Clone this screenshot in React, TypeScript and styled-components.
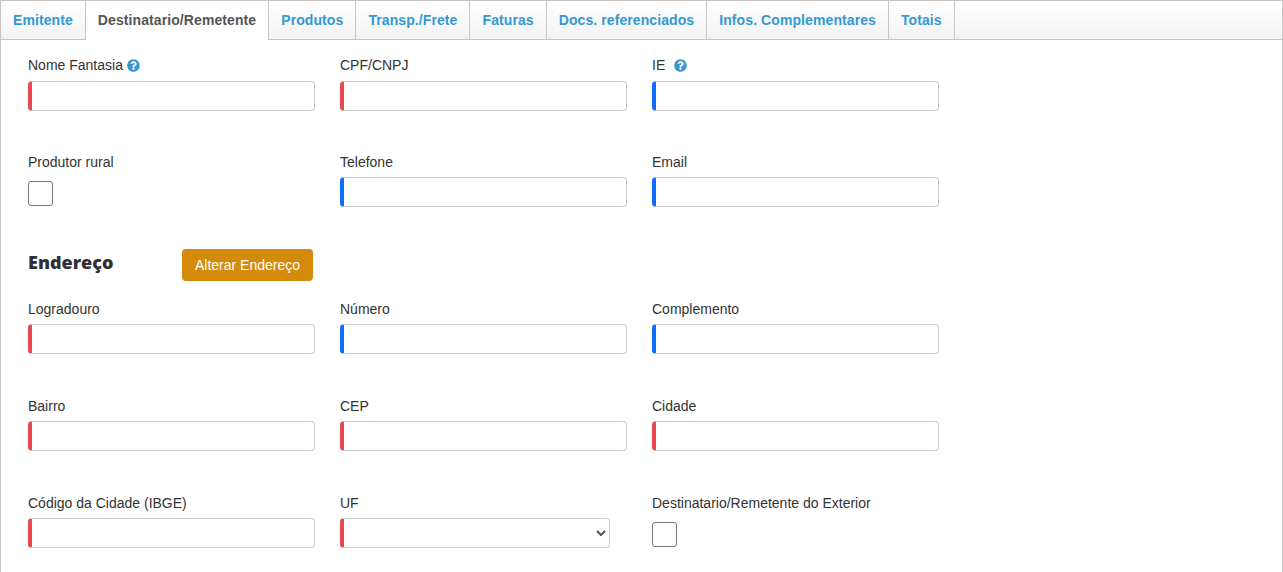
import React from 'react';
import styled, { createGlobalStyle } from 'styled-components';
import { FaQuestionCircle } from 'react-icons/fa';

const GlobalStyle = createGlobalStyle`
  html, body {
    margin: 0;
    padding: 0;
    height: 100%;
    overflow: hidden;
    background: #fff;
    font-family: "Liberation Sans", Arial, sans-serif;
    font-size: 14px;
    color: #333;
  }
`;

const Panel = styled.div`
  box-sizing: border-box;
  height: 572px;
  overflow: hidden;
  border: 1px solid #c5c5c5;
  border-bottom: none;
  background: #fff;
`;

const TabBar = styled.ul`
  display: flex;
  height: 39px;
  margin: 0;
  padding: 0;
  box-sizing: border-box;
  list-style: none;
  background: linear-gradient(#fff, #f3f3f3);
  border-bottom: 1px solid #c5c5c5;
`;

const Tab = styled.li<{ $active?: boolean }>`
  box-sizing: border-box;
  height: ${(props) => (props.$active ? '39px' : '38px')};
  padding: 0 12px;
  line-height: 38px;
  font-size: 14px;
  font-weight: bold;
  letter-spacing: 0.09px;
  white-space: nowrap;
  border-right: 1px solid #c5c5c5;
  color: ${(props) => (props.$active ? '#555' : '#3498d3')};
  background: ${(props) => (props.$active ? '#fff' : 'transparent')};
`;

const Body = styled.div`
  padding: 15px 27px 0;
`;

const Label = styled.label`
  display: flex;
  align-items: center;
  height: 21px;
  margin-bottom: 4px;
  line-height: 21px;
  color: #333;
`;

const FieldRow = styled.div<{ $first?: boolean }>`
  display: grid;
  grid-template-columns: repeat(3, 287px);
  column-gap: 25px;
  margin-bottom: ${(props) => (props.$first ? '41px' : '42px')};

  ${(props) => props.$first && `
    label {
      margin-bottom: 5px;
    }
  `}
`;

const Field = styled.div`
  display: flex;
  flex-direction: column;
  justify-content: flex-end;
`;

const HelpIcon = styled(FaQuestionCircle)<{ $gap: number }>`
  width: 13px;
  height: 13px;
  margin-left: ${(props) => props.$gap}px;
  color: #3a96d0;
`;

const TextInput = styled.input<{ $required?: boolean }>`
  box-sizing: border-box;
  width: 100%;
  height: 30px;
  padding: 0 8px;
  background: #fff;
  border: 1px solid #ccc;
  border-left: 4px solid ${(props) => (props.$required ? '#e9484f' : '#0d6efd')};
  border-radius: 4px;
  outline: none;
`;

const chevron = `url("data:image/svg+xml,%3Csvg xmlns='http://www.w3.org/2000/svg' width='10' height='6'%3E%3Cpath d='M1 1l4 4 4-4' fill='none' stroke='%23555' stroke-width='2'/%3E%3C/svg%3E")`;

const SelectInput = styled.select<{ $required?: boolean }>`
  box-sizing: border-box;
  appearance: none;
  width: 270px;
  height: 30px;
  padding: 0 4px;
  background: #fff ${chevron} no-repeat right 3px center;
  border: 1px solid #ccc;
  border-left: 4px solid ${(props) => (props.$required ? '#e9484f' : '#0d6efd')};
  border-radius: 4px;
  outline: none;
`;

const CheckBox = styled.input`
  appearance: none;
  display: block;
  box-sizing: border-box;
  width: 25px;
  height: 25px;
  margin: 4px 0 1px;
  background: #fff;
  border: 1px solid #767676;
  border-radius: 3px;
`;

const SectionHeader = styled.div`
  display: flex;
  align-items: center;
  margin: 0 0 18px;
`;

const SectionTitle = styled.h3`
  width: 154px;
  margin: 0 0 7px;
  font-family: "Open Sans", sans-serif;
  font-size: 18px;
  font-weight: 800;
  line-height: 24px;
  color: #2f2f38;
`;

const ActionButton = styled.button`
  box-sizing: border-box;
  width: 131px;
  height: 32px;
  padding: 0;
  font-family: inherit;
  font-size: 14px;
  color: #fff;
  background: #d58b0a;
  border: none;
  border-radius: 4px;
`;

const tabs = [
  'Emitente',
  'Destinatario/Remetente',
  'Produtos',
  'Transp./Frete',
  'Faturas',
  'Docs. referenciados',
  'Infos. Complementares',
  'Totais',
];

export default function App() {
  return (
    <>
      <GlobalStyle />
      <Panel>
        <TabBar>
          {tabs.map((tab) => (
            <Tab key={tab} $active={tab === 'Destinatario/Remetente'}>{tab}</Tab>
          ))}
        </TabBar>
        <Body>
          <FieldRow $first>
            <Field>
              <Label>Nome Fantasia<HelpIcon $gap={4} /></Label>
              <TextInput $required />
            </Field>
            <Field>
              <Label>CPF/CNPJ</Label>
              <TextInput $required />
            </Field>
            <Field>
              <Label>IE<HelpIcon $gap={9} /></Label>
              <TextInput />
            </Field>
          </FieldRow>

          <FieldRow>
            <Field>
              <Label>Produtor rural</Label>
              <CheckBox type="checkbox" />
            </Field>
            <Field>
              <Label>Telefone</Label>
              <TextInput />
            </Field>
            <Field>
              <Label>Email</Label>
              <TextInput />
            </Field>
          </FieldRow>

          <SectionHeader>
            <SectionTitle>Endereço</SectionTitle>
            <ActionButton>Alterar Endereço</ActionButton>
          </SectionHeader>

          <FieldRow>
            <Field>
              <Label>Logradouro</Label>
              <TextInput $required />
            </Field>
            <Field>
              <Label>Número</Label>
              <TextInput />
            </Field>
            <Field>
              <Label>Complemento</Label>
              <TextInput />
            </Field>
          </FieldRow>

          <FieldRow>
            <Field>
              <Label>Bairro</Label>
              <TextInput $required />
            </Field>
            <Field>
              <Label>CEP</Label>
              <TextInput $required />
            </Field>
            <Field>
              <Label>Cidade</Label>
              <TextInput $required />
            </Field>
          </FieldRow>

          <FieldRow>
            <Field>
              <Label>Código da Cidade (IBGE)</Label>
              <TextInput $required />
            </Field>
            <Field>
              <Label>UF</Label>
              <SelectInput $required><option /></SelectInput>
            </Field>
            <Field>
              <Label>Destinatario/Remetente do Exterior</Label>
              <CheckBox type="checkbox" />
            </Field>
          </FieldRow>
        </Body>
      </Panel>
    </>
  );
}
